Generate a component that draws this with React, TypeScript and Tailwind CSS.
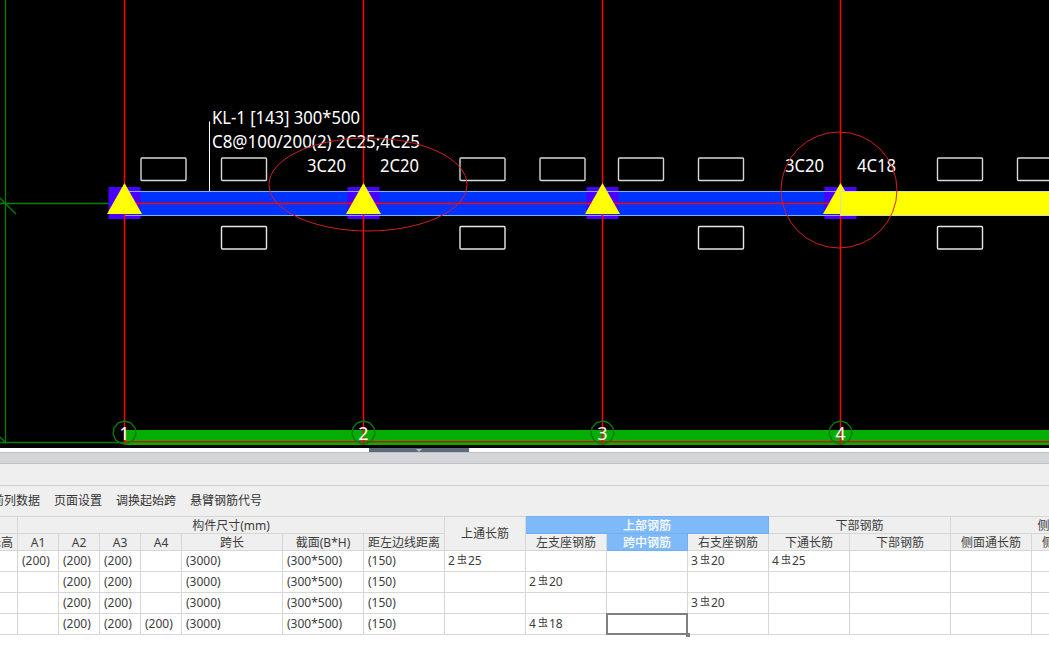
import React from 'react';

const font = '"Noto Sans", "Noto Sans CJK SC", sans-serif';

const gridX = [124.5, 363.5, 602.5, 840.5];
const topBoxes = [141, 221.5, 460, 540, 618.5, 698.5, 937.5, 1017.5];
const bottomBoxes = [221.5, 460, 698.5, 937.5];

// the CAD view draws its axis bubbles as coarse polygons
const bubble = (cx: number, cy: number, r: number) =>
  Array.from({ length: 11 }, (_, i) => {
    const a = (i / 11) * Math.PI * 2 - Math.PI / 2;
    return `${cx + r * Math.cos(a)},${cy + r * Math.sin(a)}`;
  }).join(' ');

const CadView = () => (
  <svg width="1049" height="448" viewBox="0 0 1049 448" className="block" style={{ fontFamily: font }}>
    {/* green axes */}
    <g stroke="#008000" strokeWidth="1.3" fill="none">
      <path d="M5.5 0V443" />
      <path d="M0 203.5H124" />
      <path d="M0 198L16 214" />
      <path d="M0 437L6 443" />
      <path d="M0 442.5H124" />
    </g>

    {/* bottom band */}
    <rect x="124" y="430" width="925" height="15" fill="#05ae05" />
    <rect x="124" y="441" width="925" height="1.5" fill="#d01010" />

    {/* beam */}
    <rect x="124.5" y="191.5" width="716" height="24" fill="#0033ff" />
    {gridX.map((x) => (
      <rect key={x} x={x - 16} y="187" width="32" height="32" fill="#4a00ff" />
    ))}
    <rect x="124.5" y="191.5" width="716" height="24" fill="none" stroke="#7fb0ff" />
    <path d="M124 203.5H840" stroke="#ff0000" strokeWidth="1.5" />

    {/* grid lines */}
    {gridX.map((x) => (
      <path key={x} d={`M${x} 0V445`} stroke="#ff0000" strokeWidth="1.5" />
    ))}

    {gridX.map((x) => (
      <polygon key={x} points={`${x},183 ${x + 17.5},214 ${x - 17.5},214`} fill="#ffff00" />
    ))}
    <rect x="840.5" y="191.5" width="210" height="24" fill="#ffff00" stroke="#d4dcb8" />

    {/* span boxes */}
    {topBoxes.map((x) => (
      <rect key={x} x={x} y="158" width="45" height="22.5" rx="1" fill="none" stroke="#d8d8d8" strokeWidth="1.4" />
    ))}
    {bottomBoxes.map((x) => (
      <rect key={x} x={x} y="226.5" width="45" height="22.5" rx="1" fill="none" stroke="#e8e8e8" strokeWidth="1.4" />
    ))}

    {/* leader + labels */}
    <path d="M209.5 121.5V191" stroke="#ffffff" strokeWidth="1" />
    <g fill="#ffffff" fontSize="18">
      <text x="212" y="124" textLength="148" lengthAdjust="spacingAndGlyphs">KL-1 [143] 300*500</text>
      <text x="212" y="148" textLength="208" lengthAdjust="spacingAndGlyphs">C8@100/200(2) 2C25;4C25</text>
      <text x="307" y="172" textLength="39" lengthAdjust="spacingAndGlyphs">3C20</text>
      <text x="380" y="172" textLength="39" lengthAdjust="spacingAndGlyphs">2C20</text>
      <text x="785" y="172" textLength="39" lengthAdjust="spacingAndGlyphs">3C20</text>
      <text x="857" y="172" textLength="39" lengthAdjust="spacingAndGlyphs">4C18</text>
    </g>

    {/* markups */}
    <ellipse cx="368" cy="184.5" rx="99" ry="46.5" fill="none" stroke="#d42020" strokeWidth="1" />
    <circle cx="839" cy="190" r="58" fill="none" stroke="#d42020" strokeWidth="1" />

    {/* axis bubbles */}
    {gridX.map((x, i) => (
      <g key={x}>
        <polygon points={bubble(x, 432.5, 11.5)} fill="none" stroke="#0a7a0a" strokeWidth="1.4" />
        <text x={x} y="439.5" textAnchor="middle" fill="#ffffff" fontSize="18">{i + 1}</text>
      </g>
    ))}
  </svg>
);

const Bar = ({ n, d }: { n: string; d: string }) => (
  <div className="-ml-[1px] -mt-[2px] whitespace-nowrap">
    {n}
    <span className="text-[10px] ml-[2px] mr-[1px] align-[2px]">虫</span>
    {d}
  </div>
);

const dim = 'border border-[#d6d6d6] p-0 pl-[4px] text-left overflow-hidden whitespace-nowrap';
const head = 'border border-[#d6d6d6] p-0 pt-[1px] font-normal text-center overflow-hidden whitespace-nowrap bg-[#efefef]';
const active = 'border border-[#6fb0f5] p-0 pt-[1px] font-medium text-center overflow-hidden whitespace-nowrap bg-[#7fb9f8] text-white';

const rows = [
  { a1: '(200)', a4: '', top: '2|25', left: '', right: '3|20', low: '4|25' },
  { a1: '', a4: '', top: '', left: '2|20', right: '', low: '' },
  { a1: '', a4: '', top: '', left: '', right: '3|20', low: '' },
  { a1: '', a4: '(200)', top: '', left: '4|18', right: '', low: '' },
];

const rebar = (v: string) => {
  if (!v) return null;
  const [n, d] = v.split('|');
  return <Bar n={n} d={d} />;
};

const widths = [60, 41, 41, 41, 41, 101, 81, 81, 81, 81, 81, 81, 81, 101, 81, 81, 60];

const SpanTable = () => (
  <table className="table-fixed border-collapse text-[12px] leading-[14px] text-[#3c3c3c] -ml-[43px] w-[1165px]">
    <colgroup>
      {widths.map((w, i) => (
        <col key={i} style={{ width: w }} />
      ))}
    </colgroup>
    <thead>
      <tr className="h-[17px]">
        <th className={head}></th>
        <th className={head} colSpan={7}>构件尺寸(mm)</th>
        <th className={head} rowSpan={2}>上通长筋</th>
        <th className={active} colSpan={3}>上部钢筋</th>
        <th className={head} colSpan={2}>下部钢筋</th>
        <th className={head} colSpan={3}>侧面钢筋</th>
      </tr>
      <tr className="h-[17px]">
        <th className={`${head} !text-right pr-[4px]`}>标高</th>
        <th className={head}>A1</th>
        <th className={head}>A2</th>
        <th className={head}>A3</th>
        <th className={head}>A4</th>
        <th className={head}>跨长</th>
        <th className={head}>截面(B*H)</th>
        <th className={head}>距左边线距离</th>
        <th className={head}>左支座钢筋</th>
        <th className={active}>跨中钢筋</th>
        <th className={head}>右支座钢筋</th>
        <th className={head}>下通长筋</th>
        <th className={head}>下部钢筋</th>
        <th className={head}>侧面通长筋</th>
        <th className={head}>侧面原位筋</th>
        <th className={head}></th>
      </tr>
    </thead>
    <tbody>
      {rows.map((r, i) => (
        <tr key={i} className="h-[21px] bg-white">
          <td className={dim}></td>
          <td className={dim}>{r.a1}</td>
          <td className={dim}>(200)</td>
          <td className={dim}>(200)</td>
          <td className={dim}>{r.a4}</td>
          <td className={dim}>(3000)</td>
          <td className={dim}>(300*500)</td>
          <td className={dim}>(150)</td>
          <td className={dim}>{rebar(r.top)}</td>
          <td className={dim}>{rebar(r.left)}</td>
          <td className={`${dim} ${i === 3 ? 'relative !overflow-visible' : ''}`}>
            {i === 3 && (
              <>
                <div className="absolute -inset-px border-2 border-[#808080]" />
                <div className="absolute -right-[3px] -bottom-[3px] w-[4px] h-[4px] bg-[#808080]" />
              </>
            )}
          </td>
          <td className={dim}>{rebar(r.right)}</td>
          <td className={dim}>{rebar(r.low)}</td>
          <td className={dim}></td>
          <td className={dim}></td>
          <td className={dim}></td>
          <td className={dim}></td>
        </tr>
      ))}
    </tbody>
  </table>
);

export default function App() {
  return (
    <div className="w-[1049px] h-[662px] overflow-hidden bg-white flex flex-col" style={{ fontFamily: font }}>
      <div className="h-[448px] shrink-0 bg-black">
        <CadView />
      </div>

      {/* splitter */}
      <div className="h-[4px] shrink-0 bg-white pl-[369px]">
        <div className="w-[100px] h-[4px] bg-[#5f6b78] flex justify-center">
          <div className="w-0 h-0 mt-px border-x-[3px] border-x-transparent border-t-[3px] border-t-[#b8bcc2]" />
        </div>
      </div>
      <div className="h-[12px] shrink-0 bg-[#d3d5d9] border-y border-[#bfc2c8]" />

      <div className="h-[22px] shrink-0 bg-[#efefef] border-b border-[#cfcfcf]" />

      {/* toolbar */}
      <div className="h-[30px] shrink-0 bg-[#efefef] flex items-center gap-[14px] text-[12px] text-[#333333] -ml-[8px]">
        <span>前列数据</span>
        <span>页面设置</span>
        <span>调换起始跨</span>
        <span>悬臂钢筋代号</span>
      </div>

      <div className="flex-1 bg-white overflow-hidden">
        <SpanTable />
      </div>
    </div>
  );
}
